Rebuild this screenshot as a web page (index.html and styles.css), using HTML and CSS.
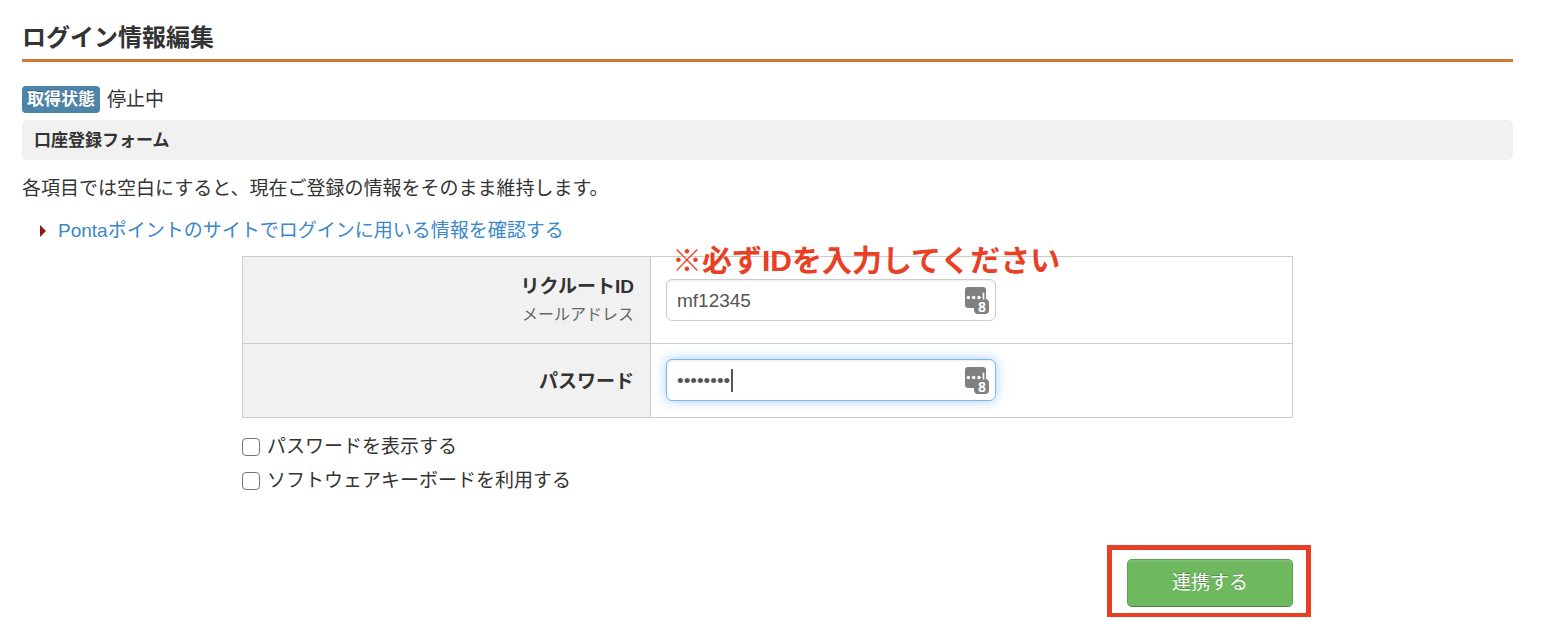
FILE: index.html
```html
<!DOCTYPE html>
<html lang="ja">
<head>
<meta charset="utf-8">
<meta name="viewport" content="width=device-width, initial-scale=1">
<title>ログイン情報編集</title>
<link rel="stylesheet" href="styles.css">
</head>
<body>
<main class="page">
  <h1 class="page-title">ログイン情報編集</h1>
  <p class="status"><span class="status-label">取得状態</span><span>停止中</span></p>
  <h2 class="section-title">口座登録フォーム</h2>
  <p class="lead">各項目では空白にすると、現在ご登録の情報をそのまま維持します。</p>
  <p class="help">
    <svg class="help-arrow" viewBox="0 0 6 12" aria-hidden="true"><path d="M0 0L6 6L0 12Z" fill="#8f1a14"/></svg>
    <a class="help-link" href="#">Pontaポイントのサイトでログインに用いる情報を確認する</a>
  </p>
  <form class="account-form">
    <table class="fields">
      <tr>
        <th class="field-name" scope="row"><label for="recruit-id">リクルートID<small class="hint">メールアドレス</small></label></th>
        <td class="field-value">
          <div class="control">
            <strong class="notice">※必ずIDを入力してください</strong>
            <input class="text-input" id="recruit-id" type="text" value="mf12345">
            <svg class="key-icon" viewBox="0 0 24 27" aria-hidden="true">
              <path fill="#808080" d="M3 0H18a3 3 0 0 1 3 3V12H13a3 3 0 0 0-3 3V21H3a3 3 0 0 1-3-3V3a3 3 0 0 1 3-3Z"/>
              <rect x="9" y="12" width="15" height="15" rx="4" fill="#808080"/>
              <circle cx="3.4" cy="10.5" r="1.7" fill="#fff"/>
              <circle cx="8.7" cy="10.5" r="1.7" fill="#fff"/>
              <circle cx="14" cy="10.5" r="1.7" fill="#fff"/>
              <path stroke="#fff" stroke-width="1.6" d="M18.5 5.5V12.5"/>
              <text x="17" y="25" text-anchor="middle" class="badge-number">8</text>
            </svg>
          </div>
        </td>
      </tr>
      <tr class="row-password">
        <th class="field-name" scope="row"><label for="password">パスワード</label></th>
        <td class="field-value">
          <div class="control">
            <input class="text-input is-active" id="password" type="password" value="mf123456">
            <span class="caret"></span>
            <svg class="key-icon" viewBox="0 0 24 27" aria-hidden="true">
              <path fill="#808080" d="M3 0H18a3 3 0 0 1 3 3V12H13a3 3 0 0 0-3 3V21H3a3 3 0 0 1-3-3V3a3 3 0 0 1 3-3Z"/>
              <rect x="9" y="12" width="15" height="15" rx="4" fill="#808080"/>
              <circle cx="3.4" cy="10.5" r="1.7" fill="#fff"/>
              <circle cx="8.7" cy="10.5" r="1.7" fill="#fff"/>
              <circle cx="14" cy="10.5" r="1.7" fill="#fff"/>
              <path stroke="#fff" stroke-width="1.6" d="M18.5 5.5V12.5"/>
              <text x="17" y="25" text-anchor="middle" class="badge-number">8</text>
            </svg>
          </div>
        </td>
      </tr>
    </table>
    <div class="options">
      <label class="option"><input class="check" type="checkbox">パスワードを表示する</label>
      <label class="option"><input class="check" type="checkbox">ソフトウェアキーボードを利用する</label>
    </div>
    <div class="actions">
      <div class="submit-wrap"><button class="submit" type="button">連携する</button></div>
    </div>
  </form>
</main>
</body>
</html>
```
FILE: styles.css
```css
* { box-sizing: border-box; }

body {
  margin: 0;
  background: #fff;
  color: #333;
  font-family: "Liberation Sans", "Noto Sans CJK JP", sans-serif;
  font-size: 19px;
  line-height: 28px;
}

.page { padding: 20px 31px 10px 22px; }

.page-title {
  margin: 0 0 24px;
  padding-bottom: 3px;
  border-bottom: 3px solid #d27a33;
  font-size: 24px;
  line-height: 36px;
}

.status {
  display: flex;
  align-items: center;
  gap: 7px;
  margin: 0 0 7px;
  line-height: 27px;
}

.status-label {
  padding: 0 5px;
  border-radius: 4px;
  background: #4d85aa;
  color: #fff;
  font-size: 17px;
  font-weight: bold;
  text-shadow: 0 -1px 0 rgba(0, 0, 0, .25);
}

.section-title {
  margin: 0 0 15px;
  padding: 1px 12px 0;
  border-radius: 5px;
  background: #f1f1f1;
  font-size: 17px;
  line-height: 39px;
}

.lead { margin: 0 0 14px; }

.help {
  display: flex;
  align-items: center;
  gap: 12px;
  margin: 0 0 11px;
  padding-left: 18px;
}

.help-arrow { width: 6px; height: 12px; }
.help-link { color: #3b87c8; text-decoration: none; }

.account-form { max-width: 1051px; margin: 0 auto; }

.fields {
  width: 100%;
  border-collapse: collapse;
  table-layout: fixed;
}

.field-name, .field-value { border: 1px solid #ccc; }

.field-name {
  width: 408px;
  padding: 16px 16px 14px;
  background: #f1f1f1;
  text-align: right;
  vertical-align: top;
}

.field-value { padding: 22px 15px; vertical-align: top; }

.row-password .field-name { vertical-align: middle; }
.row-password .field-value { padding: 15px 15px 16px; }

.hint {
  display: block;
  color: #666;
  font-size: 16px;
  font-weight: normal;
}

.control { position: relative; max-width: 330px; }

.text-input {
  display: block;
  width: 100%;
  height: 42px;
  padding: 2px 40px 0 10px;
  border: 1px solid #ccc;
  border-radius: 6px;
  outline: 0;
  background: #fff;
  box-shadow: inset 0 1px 2px rgba(0, 0, 0, .08);
  color: #555;
  font: inherit;
}

.is-active {
  border-color: #82b5e8;
  box-shadow: inset 0 1px 2px rgba(0, 0, 0, .08), 0 0 12px rgba(82, 158, 236, .5);
}

.key-icon { position: absolute; top: 8px; right: 7px; width: 24px; height: 27px; }
.badge-number { font: bold 14px "Open Sans", sans-serif; fill: #fff; }
.caret { position: absolute; top: 10px; left: 65px; width: 2px; height: 23px; background: #555; }

.notice {
  position: absolute;
  bottom: 100%;
  left: 6px;
  color: #e94025;
  font-size: 30px;
  line-height: 36px;
  white-space: nowrap;
}

.options { display: grid; gap: 6px; margin-top: 15px; }
.option { display: flex; align-items: center; gap: 7px; }

.check {
  appearance: none;
  width: 18px;
  height: 18px;
  margin: 0;
  border: 1px solid #767676;
  border-radius: 4px;
  background: #fff;
}

.check:checked { background: #3b87c8; }

.actions { display: flex; justify-content: flex-end; margin-top: 64px; }
.submit-wrap { position: relative; }

.submit-wrap::after {
  content: "";
  position: absolute;
  inset: -14px -18px -11px -20px;
  border: 5px solid #e94025;
  pointer-events: none;
}

.submit {
  display: block;
  height: 48px;
  padding: 0 44px;
  border: 1px solid #59a34d;
  border-bottom-color: #498740;
  border-radius: 5px;
  background: #6eb95f;
  box-shadow: inset 0 2px 0 rgba(255, 255, 255, .12);
  color: #fff;
  font: inherit;
  text-shadow: 0 -1px 0 rgba(0, 0, 0, .25);
  cursor: pointer;
}
```
